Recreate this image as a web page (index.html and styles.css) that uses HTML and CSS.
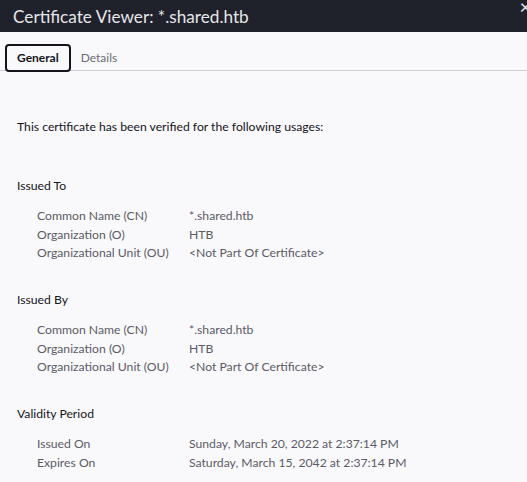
FILE: index.html
```html
<!DOCTYPE html>
<html>
<head>
<meta charset="utf-8">
<link rel="stylesheet" href="styles.css">
</head>
<body>
<header class="titlebar">
  <h1 class="title">Certificate Viewer: *.shared.htb</h1>
  <span class="close">×</span>
</header>
<nav class="tabs">
  <span class="tab active">General</span>
  <span class="tab">Details</span>
</nav>
<main class="content">
  <p class="verified">This certificate has been verified for the following usages:</p>

  <section class="group">
    <h2 class="group-title">Issued To</h2>
    <dl class="fields">
      <dt>Common Name (CN)</dt><dd>*.shared.htb</dd>
      <dt>Organization (O)</dt><dd>HTB</dd>
      <dt>Organizational Unit (OU)</dt><dd>&lt;Not Part Of Certificate&gt;</dd>
    </dl>
  </section>

  <section class="group">
    <h2 class="group-title">Issued By</h2>
    <dl class="fields">
      <dt>Common Name (CN)</dt><dd>*.shared.htb</dd>
      <dt>Organization (O)</dt><dd>HTB</dd>
      <dt>Organizational Unit (OU)</dt><dd>&lt;Not Part Of Certificate&gt;</dd>
    </dl>
  </section>

  <section class="group">
    <h2 class="group-title">Validity Period</h2>
    <dl class="fields">
      <dt>Issued On</dt><dd>Sunday, March 20, 2022 at 2:37:14 PM</dd>
      <dt>Expires On</dt><dd>Saturday, March 15, 2042 at 2:37:14 PM</dd>
    </dl>
  </section>
</main>
</body>
</html>
```
FILE: styles.css
```css
html, body {
  margin: 0;
  padding: 0;
}
body {
  background: #f9f9fb;
  font-family: "Lato", "Open Sans", sans-serif;
  color: #15141a;
  overflow: hidden;
}
.titlebar {
  background: #1f222b;
  height: 32px;
  display: flex;
  align-items: center;
  justify-content: space-between;
  padding-left: 13px;
  overflow: hidden;
}
.title {
  margin: 0;
  font-weight: 400;
  font-size: 17.2px;
  color: #e6e6ea;
  line-height: 32px;
  padding-top: 1px;
}
.close {
  color: #e6e6ea;
  font-size: 20px;
  align-self: flex-start;
  line-height: 12px;
  margin-right: -4px;
}
.tabs {
  display: flex;
  align-items: center;
  gap: 10px;
  padding: 13px 0 0 5px;
  border-bottom: 1px solid #cfcfd8;
  height: 25px;
}
.tab {
  font-size: 12px;
  color: #6b6b75;
  line-height: 18px;
}
.tab.active {
  font-weight: 700;
  color: #15141a;
  border: 2px solid #15141a;
  border-radius: 4px;
  padding: 3px 10px;
  margin-top: 1px;
}
.content {
  padding: 0 17px;
  font-size: 12.2px;
}
.verified {
  margin: 47px 0 0 0;
  line-height: 18px;
}
.group {
  margin-top: 29px;
}
.verified + .group {
  margin-top: 41px;
}
.group-title {
  margin: 0;
  font-size: 12.2px;
  font-weight: 400;
  line-height: 18px;
}
.fields {
  display: grid;
  grid-template-columns: 152px 1fr;
  margin: 12px 0 0 20px;
  row-gap: 0.5px;
  color: #5b5b66;
  line-height: 18px;
}
.fields dt, .fields dd {
  margin: 0;
}
```
